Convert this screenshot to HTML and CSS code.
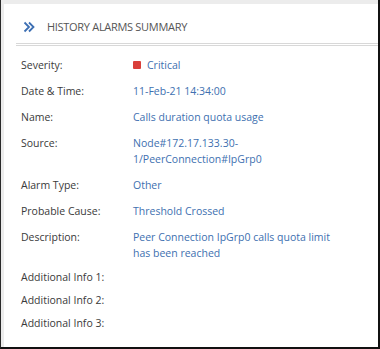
FILE: index.html
```html
<!DOCTYPE html>
<html>
<head>
<meta charset="utf-8">
<link rel="stylesheet" href="styles.css">
</head>
<body>
<div class="frame">
  <div class="panel">
    <div class="header">
      <svg class="chev" width="12" height="12" viewBox="0 0 12 12">
        <path d="M1.5 1.5 L6 6 L1.5 10.5 M6 1.5 L10.5 6 L6 10.5" fill="none" stroke="#3d6fb3" stroke-width="1.8"/>
      </svg>
      <span class="title">HISTORY ALARMS SUMMARY</span>
    </div>
    <div class="rows">
      <div class="row"><div class="label">Severity:</div><div class="value"><span class="sev"></span>Critical</div></div>
      <div class="row"><div class="label">Date &amp; Time:</div><div class="value">11-Feb-21 14:34:00</div></div>
      <div class="row"><div class="label">Name:</div><div class="value">Calls duration quota usage</div></div>
      <div class="row"><div class="label">Source:</div><div class="value">Node#172.17.133.30-<br>1/PeerConnection#IpGrp0</div></div>
      <div class="row"><div class="label">Alarm Type:</div><div class="value">Other</div></div>
      <div class="row"><div class="label">Probable Cause:</div><div class="value">Threshold Crossed</div></div>
      <div class="row last"><div class="label">Description:</div><div class="value">Peer Connection IpGrp0 calls quota limit<br>has been reached</div></div>
      <div class="row add"><div class="label">Additional Info 1:</div><div class="value"></div></div>
      <div class="row add"><div class="label">Additional Info 2:</div><div class="value"></div></div>
      <div class="row add"><div class="label">Additional Info 3:</div><div class="value"></div></div>
    </div>
  </div>
</div>
</body>
</html>
```
FILE: styles.css
```css
html, body {
  margin: 0;
  padding: 0;
  background: #fff;
}
.frame {
  width: 380px;
  height: 349px;
  box-sizing: border-box;
  border-left: 1px solid #2a2a2a;
  border-right: 2px solid #111;
  border-bottom: 2px solid #111;
  background: #fff;
  overflow: hidden;
}
.panel {
  height: 100%;
  box-sizing: border-box;
  border-top: 4px solid #ececec;
  border-left: 3px solid #ececec;
  font-family: "Open Sans", "Noto Sans", sans-serif;
  font-size: 10.5px;
  color: #3a3a3a;
}
.header {
  display: flex;
  align-items: center;
  margin-left: 12px;
  height: 42px;
  padding-top: 6px;
  padding-left: 7px;
  border-bottom: 3px double #d8d8d8;
  box-sizing: border-box;
}
.chev {
  margin-right: 12px;
}
.title {
  font-size: 11px;
  color: #555;
  letter-spacing: -0.3px;
}
.rows {
  padding-left: 17px;
  padding-top: 11px;
}
.row {
  display: flex;
  line-height: 16px;
  margin-bottom: 10px;
}
.row.last {
  margin-bottom: 8px;
}
.row.add {
  margin-bottom: 7px;
}
.label {
  width: 112px;
  flex: none;
}
.value {
  color: #4070b0;
}
.sev {
  display: inline-block;
  width: 8px;
  height: 8px;
  background: #d93f3a;
  border-radius: 1px;
  margin-right: 6px;
}
```
